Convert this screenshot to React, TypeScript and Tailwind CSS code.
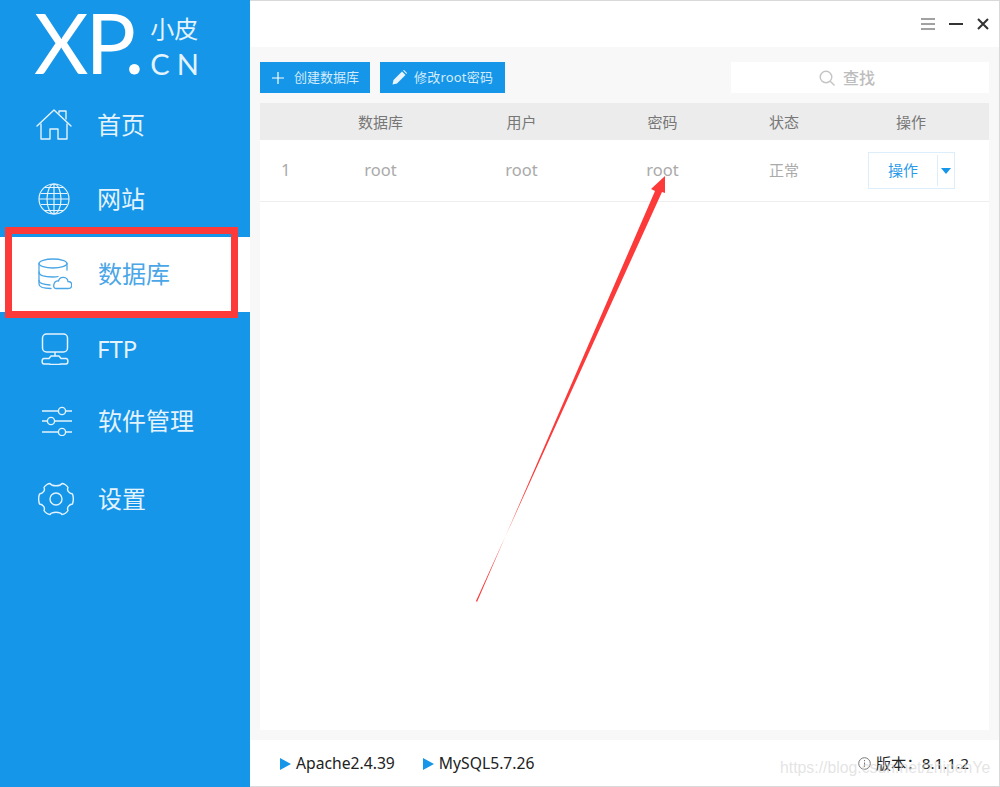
import { ReactNode } from "react";

const CJK = "font-['Noto_Sans','Noto_Sans_CJK_SC',sans-serif]";

const HomeIcon = () => (
  <svg width="36" height="32" viewBox="0 0 36 32" fill="none" stroke="currentColor" strokeWidth="1.4" strokeLinejoin="round" strokeLinecap="round">
    <path d="M1 17 L18 1 L35 17" />
    <path d="M23 4 V2 H30 V10" />
    <path d="M5 15 V30 H14 V20 H22 V30 H31 V15" />
  </svg>
);

const GlobeIcon = () => (
  <svg width="32" height="32" viewBox="0 0 32 32" fill="none" stroke="currentColor" strokeWidth="1.2">
    <circle cx="16" cy="16" r="15" />
    <ellipse cx="16" cy="16" rx="7" ry="15" />
    <path d="M16 1 V31 M1 16 H31 M3 10.5 H29 M3 21.5 H29 M7 4.5 H25 M7 27.5 H25" />
  </svg>
);

const DatabaseIcon = () => (
  <svg width="34" height="32" viewBox="0 0 34 32" fill="none" stroke="currentColor" strokeWidth="1.3" strokeLinecap="round">
    <ellipse cx="15" cy="5.5" rx="14" ry="4.5" />
    <path d="M1 5.5 V26 C1 29 6 30.5 13 30.5 M29 5.5 V12" />
    <path d="M1 14 C1 17 6 19 15 19 C17 19 19 18.8 20 18.5 M1 22.5 C1 25 5 26.5 12 27" />
    <path d="M18 30.5 H30 C35 30.5 35 23.5 30 23.5 C29.5 18.5 22 17.5 20.5 23 C15.5 22.5 14 30.5 18 30.5 Z" />
  </svg>
);

const FtpIcon = () => (
  <svg width="28" height="32" viewBox="0 0 28 32" fill="none" stroke="currentColor" strokeWidth="1.5" strokeLinejoin="round">
    <rect x="1.5" y="1" width="25" height="18" rx="4" />
    <path d="M14 19 V23" />
    <path d="M10 23 H18 L20 25.5 H25 C27.5 25.5 27.5 31 25 31 H20 L18 31.5 H10 L8 31 H3 C0.5 31 0.5 25.5 3 25.5 H8 Z" />
  </svg>
);

const SlidersIcon = () => (
  <svg width="32" height="30" viewBox="0 0 32 30" fill="none" stroke="currentColor" strokeWidth="1.4">
    <path d="M1 5 H17 M25 5 H31 M1 15 H6 M14 15 H31 M1 26 H17 M25 26 H31" />
    <circle cx="21" cy="5" r="3.6" />
    <circle cx="10" cy="15" r="3.6" />
    <circle cx="21" cy="26" r="3.6" />
  </svg>
);

const GearIcon = () => (
  <svg width="36" height="34" viewBox="0 0 36 34" fill="none" stroke="currentColor" strokeWidth="1.4" strokeLinejoin="round">
    <path d="M12 1.5 C14 4.5 22 4.5 24 1.5 C26 1.5 29 3.5 30 5.5 C28.5 8.5 31 11.5 34.5 12 C35.5 15 35.5 19 34.5 22 C31 22.5 28.5 25.5 30 28.5 C29 30.5 26 32.5 24 32.5 C22 29.5 14 29.5 12 32.5 C10 32.5 7 30.5 6 28.5 C7.5 25.5 5 22.5 1.5 22 C0.5 19 0.5 15 1.5 12 C5 11.5 7.5 8.5 6 5.5 C7 3.5 10 1.5 12 1.5 Z" />
    <circle cx="18" cy="17" r="6" />
  </svg>
);

type NavItem = { label: string; icon: ReactNode; active?: boolean; iconBox: string; shift?: string };

const NAV: NavItem[] = [
  { label: "首页", icon: <HomeIcon />, iconBox: "pl-[36px] w-[97px]", shift: "pt-[1px]" },
  { label: "网站", icon: <GlobeIcon />, iconBox: "pl-[38px] w-[97px]", shift: "pb-[2px]" },
  { label: "数据库", icon: <DatabaseIcon />, active: true, iconBox: "pl-[38px] w-[98px]", shift: "pb-[2px]" },
  { label: "FTP", icon: <FtpIcon />, iconBox: "pl-[41px] w-[97px]", shift: "pb-[2px]" },
  { label: "软件管理", icon: <SlidersIcon />, iconBox: "pl-[41px] w-[98px]", shift: "pb-[8px]" },
  { label: "设置", icon: <GearIcon />, iconBox: "pl-[38px] w-[98px]", shift: "pb-[2px]" },
];

function Sidebar() {
  return (
    <aside className="w-[250px] shrink-0 bg-[#1596e9] text-[#e4f3fd]">
      <div className="flex h-[87px] items-start pl-[34px]">
        <span className="font-['Lato',sans-serif] text-[84px] font-normal leading-[84px] tracking-[-3px] text-white">
          XP.
        </span>
        <div className="ml-[9px] mt-[14px] flex flex-col">
          <span className={`${CJK} text-[24px] leading-[30px]`}>小皮</span>
          <span className="mt-[3px] font-['Lato',sans-serif] text-[29px] leading-[34px] tracking-[7px]">CN</span>
        </div>
      </div>
      <nav>
        {NAV.map((item) => (
          <div
            key={item.label}
            className={`flex h-[75px] items-center ${item.shift ?? ""} ${item.active ? "bg-white text-[#4aa6e6]" : ""}`}
          >
            <div className={item.iconBox}>{item.icon}</div>
            <span className={`${CJK} text-[24px] leading-none`}>{item.label}</span>
          </div>
        ))}
      </nav>
    </aside>
  );
}

function Toolbar() {
  return (
    <div className="flex h-[31px] items-stretch gap-[10px]">
      <button className={`${CJK} flex w-[110px] items-center bg-[#1596e9] pl-[11px] text-[13px] text-[#d4ecfb]`}>
        <svg width="14" height="14" viewBox="0 0 14 14" stroke="#fff" strokeWidth="1.2">
          <path d="M7 1 V13 M1 7 H13" />
        </svg>
        <span className="ml-[9px]">创建数据库</span>
      </button>
      <button className={`${CJK} flex w-[125px] items-center bg-[#1596e9] pl-[12px] text-[13px] tracking-[0.2px] text-[#d4ecfb]`}>
        <svg width="15" height="15" viewBox="0 0 15 15" fill="#e8f5fd">
          <path d="M0.5 14.5 L1.5 10 L10 1.5 L13.5 5 L5 13.5 Z" />
          <path d="M11 0.5 L12 0 L15 3 L14.5 4 Z" />
        </svg>
        <span className="ml-[7px]">修改root密码</span>
      </button>
      <div className="ml-auto flex w-[258px] items-center justify-center bg-white pr-[26px] text-[#bdbdbd]">
        <svg width="16" height="16" viewBox="0 0 16 16" fill="none" stroke="#c4c4c4" strokeWidth="1.4">
          <circle cx="7" cy="7" r="5.8" />
          <path d="M11 11 L15.5 15.5" />
        </svg>
        <span className={`${CJK} ml-[8px] text-[16px] font-medium`}>查找</span>
      </div>
    </div>
  );
}

const COLS = "grid grid-cols-[50px_141px_141px_141px_102px_1fr] items-center text-center";

function DbTable() {
  return (
    <div className={`${CJK} mt-[10px] flex min-h-0 flex-1 flex-col bg-white text-[15px]`}>
      <div className={`${COLS} h-[37px] bg-[#ececec] pt-[2px] text-[#777]`}>
        <span />
        <span>数据库</span>
        <span>用户</span>
        <span>密码</span>
        <span>状态</span>
        <span className="pr-[2px]">操作</span>
      </div>
      <div className={`${COLS} h-[62px] border-b border-[#eeeeee] text-[#aaa]`}>
        <span className="text-left indent-[21px] text-[16.5px]">1</span>
        <span className="text-[16.5px]">root</span>
        <span className="text-[16.5px]">root</span>
        <span className="text-[16.5px]">root</span>
        <span>正常</span>
        <div className="ml-[33px] flex h-[37px] w-[87px] items-center border border-[#dceefb] text-[#2b9aea]">
          <span className="flex-1">操作</span>
          <span className="flex h-[31px] w-[17px] items-center justify-center border-l border-[#dceefb]">
            <svg width="10" height="6" viewBox="0 0 10 6" fill="#1596e9">
              <path d="M0 0 H10 L5 6 Z" />
            </svg>
          </span>
        </div>
      </div>
    </div>
  );
}

function Footer() {
  return (
    <div className={`${CJK} relative flex h-[46px] items-center bg-white pl-[30px] pr-[30px] pt-[1px] text-[15.7px] text-[#222]`}>
      <svg width="11" height="12" viewBox="0 0 11 12" fill="#1596e9">
        <path d="M0 0 L11 6 L0 12 Z" />
      </svg>
      <span className="ml-[5px]">Apache2.4.39</span>
      <svg className="ml-[28px]" width="11" height="12" viewBox="0 0 11 12" fill="#1596e9">
        <path d="M0 0 L11 6 L0 12 Z" />
      </svg>
      <span className="ml-[5px]">MySQL5.7.26</span>
      <svg className="ml-auto" width="13" height="13" viewBox="0 0 13 13" fill="none" stroke="#777" strokeWidth="1">
        <circle cx="6.5" cy="6.5" r="5.8" />
        <path d="M6.5 5.5 V10 M6.5 3 V4.2" />
      </svg>
      <span className="ml-[5px] text-[15.3px]">版本：8.1.1.2</span>
    </div>
  );
}

export default function App() {
  return (
    <div className="relative flex h-[787px] w-[1000px] overflow-hidden bg-white">
      <Sidebar />
      <main className="flex min-w-0 flex-1 flex-col border-b border-r border-t border-[#d9d9d9]">
        <div className="flex h-[46px] items-center justify-end gap-[14px] bg-white pr-[10px] text-[#333]">
          <svg width="14" height="12" viewBox="0 0 14 12" stroke="#444" strokeWidth="1">
            <path d="M0 1 H14 M0 6 H14 M0 11 H14" />
          </svg>
          <svg width="14" height="12" viewBox="0 0 14 12" stroke="#333" strokeWidth="2">
            <path d="M0 6 H14" />
          </svg>
          <svg width="12" height="12" viewBox="0 0 12 12" stroke="#333" strokeWidth="2">
            <path d="M1 1 L11 11 M11 1 L1 11" />
          </svg>
        </div>
        <div className="flex min-h-0 flex-1 flex-col bg-[#f8f8f8] px-[10px] py-[15px] pb-[10px]">
          <Toolbar />
          <DbTable />
        </div>
        <Footer />
      </main>

      {/* annotation drawn over the screenshot */}
      <div className="pointer-events-none absolute left-[5px] top-[227px] h-[91px] w-[233px] border-[7px] border-[#fd3a3a]" />
      <svg className="pointer-events-none absolute left-0 top-0" width="1000" height="787" fill="#fd3a3a">
        <polygon points="476,601 477,602 655,191 651,189 665,176 665,193 662,192" />
      </svg>
      <span className="pointer-events-none absolute left-[780px] top-[758px] whitespace-nowrap font-['Liberation_Sans',sans-serif] text-[15.8px] leading-[20px] text-[#d8d8d8]/70">
        https://blog.csdn.net/zhipenYe
      </span>
    </div>
  );
}
